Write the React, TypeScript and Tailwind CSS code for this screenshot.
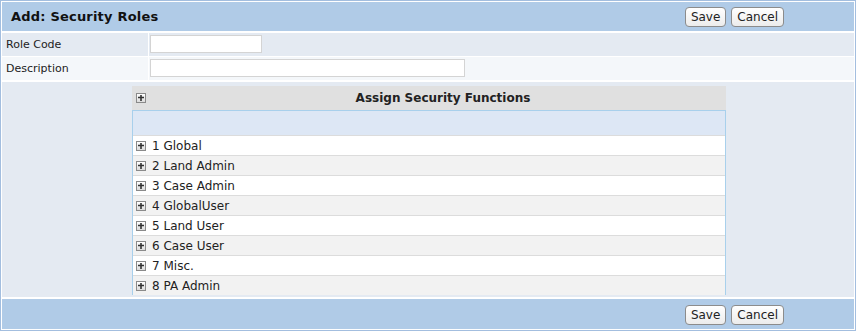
import React from "react";

const FUNCTIONS = [
  "1 Global",
  "2 Land Admin",
  "3 Case Admin",
  "4 GlobalUser",
  "5 Land User",
  "6 Case User",
  "7 Misc.",
  "8 PA Admin",
];

function PlusBox() {
  return (
    <span className="inline-flex h-[10px] w-[10px] shrink-0 items-center justify-center border border-[#8a8a8a] bg-gradient-to-b from-white to-[#dcdcdc]">
      <svg width="6" height="6" viewBox="0 0 6 6">
        <path d="M0 2.5h6M3 0v6" stroke="#333" strokeWidth="1.6" />
      </svg>
    </span>
  );
}

function Btn({ label }: { label: string }) {
  return (
    <button className="h-[20px] rounded-[4px] border border-[#8c8c8c] bg-gradient-to-b from-white to-[#ececec] px-[5px] text-[12px] leading-none text-[#222]">
      {label}
    </button>
  );
}

function ButtonBar() {
  return (
    <div className="flex gap-[5px] pr-[70px]">
      <Btn label="Save" />
      <Btn label="Cancel" />
    </div>
  );
}

export default function App() {
  return (
    <div
      className="h-[331px] w-[857px] bg-white"
      style={{ fontFamily: '"DejaVu Sans", Verdana, sans-serif' }}
    >
      <div className="flex h-[331px] w-[856px] flex-col border border-[#a3bedf] bg-white p-[1px]">
        {/* header */}
        <div className="flex h-[29px] items-center justify-between bg-[#b0cbe7] pl-[9px]">
          <h1 className="text-[13px] font-bold tracking-[0.2px] text-[#111]">Add: Security Roles</h1>
          <div className="pt-[2px]">
            <ButtonBar />
          </div>
        </div>

        {/* fields */}
        <div className="mt-[2px] flex h-[23px] text-[11px] text-[#222]">
          <div className="flex w-[146px] items-center bg-[#e4eaf2] pl-[4px] pt-[1px]">Role Code</div>
          <div className="ml-[1px] flex flex-1 items-center bg-[#e4eaf2] pl-[1px]">
            <input className="h-[18px] w-[112px] border border-[#d4d4d4] bg-white" />
          </div>
        </div>
        <div className="mt-[1px] flex h-[23px] text-[11px] text-[#222]">
          <div className="flex w-[146px] items-center bg-[#f4f7fa] pl-[4px] pt-[1px]">Description</div>
          <div className="ml-[1px] flex flex-1 items-center bg-[#f4f7fa] pl-[1px]">
            <input className="h-[18px] w-[315px] border border-[#d4d4d4] bg-white" />
          </div>
        </div>

        {/* assign functions */}
        <div className="mt-[2px] flex h-[216px] justify-start bg-[#e4eaf2] pl-[130px] pt-[4px]">
          <div className="w-[594px]">
            <div className="flex h-[24px] items-center bg-[#e0e0e0] pl-[4px]">
              <PlusBox />
              <div className="flex-1 pl-[14px] pt-[1px] text-center text-[12px] font-bold text-[#222]">
                Assign Security Functions
              </div>
            </div>
            <div className="h-[25px] border-l border-r border-t border-[#a8d0ec] bg-[#dde7f5]" />
            <div className="border-l border-r border-[#a8d0ec]">
              {FUNCTIONS.map((f, i) => (
                <div
                  key={f}
                  className={`flex h-[20px] items-center gap-[6px] border-t border-[#dcdcdc] pl-[3px] pt-[2px] text-[12px] text-[#222] ${
                    i % 2 === 0 ? "bg-white" : "bg-[#f2f2f2]"
                  }`}
                >
                  <PlusBox />
                  <span>{f}</span>
                </div>
              ))}
            </div>
          </div>
        </div>

        {/* footer */}
        <div className="mt-[2px] flex h-[30px] items-center justify-end bg-[#b0cbe7] pt-[2px]">
          <ButtonBar />
        </div>
      </div>
    </div>
  );
}
